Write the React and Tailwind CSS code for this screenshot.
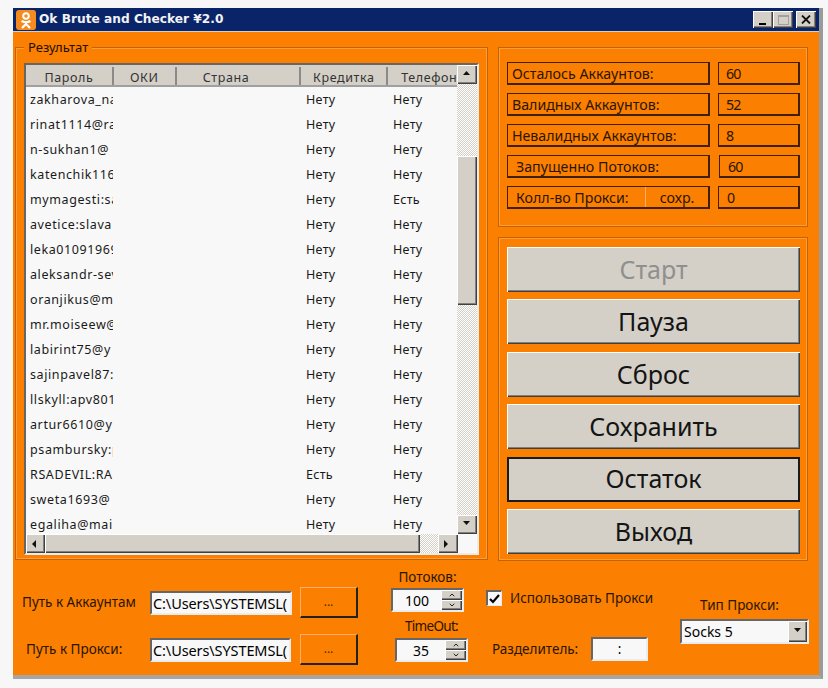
import React from "react";
import { ChevronUp, ChevronDown } from "lucide-react";

const FONT = "font-['Noto_Sans','DejaVu_Sans',sans-serif]";
const RAISED = "bg-[#d4d0c8] shadow-[inset_1px_1px_0_#ffffff,inset_-1px_-1px_0_#404040,inset_-2px_-2px_0_#808080]";
const SUNKEN = "bg-[#f8f8f8] border-t-2 border-l-2 border-t-[#666666] border-l-[#666666] border-r-2 border-b-2 border-r-[#ececec] border-b-[#ececec]";
const GROOVE = "shadow-[inset_0_0_0_1px_#c46400,inset_0_0_0_2px_#ff9c3a]";
const HATCH = "bg-[repeating-conic-gradient(#d4d0c8_0_25%,#ffffff_0_50%)] bg-[length:2px_2px]";

const rows = [
  ["zakharova_na", "Нету", "Нету"],
  ["rinat1114@ra", "Нету", "Нету"],
  ["n-sukhan1@", "Нету", "Нету"],
  ["katenchik116", "Нету", "Нету"],
  ["mymagesti:sa", "Нету", "Есть"],
  ["avetice:slava1", "Нету", "Нету"],
  ["leka01091969", "Нету", "Нету"],
  ["aleksandr-sev", "Нету", "Нету"],
  ["oranjikus@m", "Нету", "Нету"],
  ["mr.moiseew@", "Нету", "Нету"],
  ["labirint75@y", "Нету", "Нету"],
  ["sajinpavel87:", "Нету", "Нету"],
  ["llskyll:apv801", "Нету", "Нету"],
  ["artur6610@y", "Нету", "Нету"],
  ["psambursky:p", "Нету", "Нету"],
  ["RSADEVIL:RA", "Есть", "Нету"],
  ["sweta1693@", "Нету", "Нету"],
  ["egaliha@mai", "Нету", "Нету"],
];

const stats = [
  { label: "Осталось Аккаунтов:", value: "60", labelPad: "pl-[4px]", valueClass: "ml-[8px] w-[82px] pl-[7px]" },
  { label: "Валидных Аккаунтов:", value: "52", labelPad: "pl-[4px]", valueClass: "ml-[8px] w-[82px] pl-[7px]" },
  { label: "Невалидных Аккаунтов:", value: "8", labelPad: "pl-[4px]", valueClass: "ml-[8px] w-[82px] pl-[7px]" },
  { label: "Запущенно Потоков:", value: "60", labelPad: "pl-[8px]", valueClass: "ml-[9px] w-[81px] pl-[8px]" },
];

const buttons = ["Старт", "Пауза", "Сброс", "Сохранить", "Остаток", "Выход"];

const Arrow = ({ dir }) => {
  const points = { up: "0,4 7,4 3.5,0", down: "0,0 7,0 3.5,4", left: "4,0 4,8 0,4", right: "0,0 0,8 4,4" };
  return (
    <svg width="8" height="8" viewBox="0 0 8 8" className="block">
      <polygon points={points[dir]} fill="#111111" />
    </svg>
  );
};

const ScrollBtn = ({ dir, className = "" }) => (
  <div className={`${RAISED} flex items-center justify-center shrink-0 ${className}`}>
    <Arrow dir={dir} />
  </div>
);

const Spinner = ({ value, className }) => (
  <div className={`${SUNKEN} flex h-[24px] ${className}`}>
    <div className="flex-1 text-center text-[14px] leading-[21px] text-black">{value}</div>
    <div className="w-[21px] flex flex-col">
      <div className={`${RAISED} flex-1 flex items-center justify-center`}><ChevronUp size={8} strokeWidth={3} color="#222222" /></div>
      <div className={`${RAISED} flex-1 flex items-center justify-center`}><ChevronDown size={8} strokeWidth={3} color="#222222" /></div>
    </div>
  </div>
);

const OrangeBtn = () => (
  <div className="ml-[8px] w-[58px] h-[31px] flex items-center justify-center text-[12px] text-[#4a3000] bg-[#fb7f00] border-t border-l border-t-[#ffb066] border-l-[#ffb066] border-r-2 border-b-2 border-r-[#222222] border-b-[#222222]">
    ...
  </div>
);

const PathField = ({ value, width }) => (
  <div className={`${SUNKEN} ${width} h-[24px] overflow-hidden whitespace-nowrap pl-[1px] text-[14.5px] leading-[20px] text-black tracking-[-0.1px]`}>
    {value}
  </div>
);

const App = () => {
  return (
    <div className={`w-[828px] h-[688px] bg-[#f7f7f7] pt-[8px] pl-[13px] ${FONT}`}>
      <div className="w-[810px] h-[671px] flex flex-col border-r-4 border-b-4 border-r-[#9a9a9a] border-b-[#a6a6a6]">
        {/* title bar */}
        <div className="h-[23px] shrink-0 bg-[#0a246a] flex items-center">
          <svg width="20" height="20" viewBox="0 0 20 20" className="ml-[3px]">
            <rect width="20" height="20" rx="3" fill="#f58a1f" />
            <circle cx="10" cy="6" r="2.8" fill="none" stroke="#ffffff" strokeWidth="2" />
            <path d="M5.5 11 Q10 13.5 14.5 11 M10 12.5 L10 14 M6 18 L10 14 L14 18" fill="none" stroke="#ffffff" strokeWidth="2.2" />
          </svg>
          <span className="ml-[3px] text-[12.2px] font-bold text-[#f2f2f2] font-['DejaVu_Sans',sans-serif]">Ok Brute and Checker ¥2.0</span>
          <div className="ml-auto mr-[3px] flex">
            <div className={`${RAISED} w-[20px] h-[17px] flex items-end justify-center pb-[3px]`}>
              <div className="w-[7px] h-[2px] bg-black ml-[-2px]" />
            </div>
            <div className={`${RAISED} w-[20px] h-[17px] flex items-center justify-center`}>
              <div className="w-[11px] h-[10px] border border-[#a0a0a0] border-t-2" />
            </div>
            <div className={`${RAISED} w-[20px] h-[17px] ml-[3px] flex items-center justify-center`}>
              <svg width="10" height="9" viewBox="0 0 10 9">
                <path d="M1 0.5 L9 8.5 M9 0.5 L1 8.5" stroke="#111111" strokeWidth="1.8" />
              </svg>
            </div>
          </div>
        </div>
        <div className="h-px shrink-0 bg-[#d4d0c8]" />

        {/* body */}
        <div className="flex-1 min-h-0 bg-[#fb7f00] flex flex-col pt-[15px]">
          <div className="flex h-[513px] shrink-0">
            {/* results */}
            <div className={`relative ml-[2px] w-[473px] ${GROOVE} pt-[16px] pl-[9px]`}>
              <div className="absolute left-[9px] top-[-8px] px-[4px] bg-[#fb7f00] text-[13px] leading-[16px] text-[#201000]">Результат</div>
              <div className="w-[455px] h-[492px] flex flex-col border-2 border-t-[#666666] border-l-[#666666] border-r-[#ececec] border-b-[#ececec] bg-[#f8f8f8] text-[12.5px] text-[#1a1a1a]">
                <div className="flex-1 min-h-0 flex">
                  <div className="w-[432px] min-w-0 flex flex-col overflow-hidden">
                    <div className="h-[22px] shrink-0 flex bg-[#d4d0c8] border-t-2 border-t-[#d4d0c8] border-b-2 border-b-[#a0a0a0] leading-[21px] text-[#333333] tracking-[0.6px]">
                      <div className="w-[88px] text-center border-r-2 border-r-[#8a8a8a]">Пароль</div>
                      <div className="w-[63px] text-center border-r-2 border-r-[#8a8a8a]">ОКИ</div>
                      <div className="w-[125px] pr-[24px] text-center border-r-2 border-r-[#8a8a8a]">Страна</div>
                      <div className="w-[87px] text-center border-r-2 border-r-[#8a8a8a]">Кредитка</div>
                      <div className="w-[69px] pl-[13px] overflow-hidden whitespace-nowrap">Телефон</div>
                    </div>
                    {rows.map((row, i) => (
                      <div key={i} className="h-[25px] shrink-0 flex items-center leading-[25px]">
                        <div className="w-[87px] pl-[4px] overflow-hidden whitespace-nowrap tracking-[0.6px]">{row[0]}</div>
                        <div className="w-[193px]" />
                        <div className="w-[87px] tracking-[0.3px]">{row[1]}</div>
                        <div className="tracking-[0.3px]">{row[2]}</div>
                      </div>
                    ))}
                  </div>
                  <div className={`w-[20px] flex flex-col ${HATCH}`}>
                    <ScrollBtn dir="up" className="h-[19px]" />
                    <div className="h-[72px]" />
                    <div className={`${RAISED} h-[149px]`} />
                    <div className="flex-1" />
                    <ScrollBtn dir="down" className="h-[19px]" />
                  </div>
                </div>
                <div className="h-[19px] shrink-0 flex">
                  <ScrollBtn dir="left" className="w-[19px]" />
                  <div className={`${RAISED} w-[375px]`} />
                  <div className={`w-[18px] ${HATCH}`} />
                  <ScrollBtn dir="right" className="w-[20px]" />
                </div>
              </div>
            </div>

            {/* right column */}
            <div className="ml-[10px] w-[310px] flex flex-col">
              <div className={`h-[180px] shrink-0 ${GROOVE} pt-[15px] pl-[9px] flex flex-col gap-[8px] text-[14.2px] text-[#2a1500]`}>
                {stats.map((s) => (
                  <div key={s.label} className="flex h-[23px] leading-[22px]">
                    <div className={`w-[203px] border border-[#402000] border-r-2 border-b-2 ${s.labelPad}`}>{s.label}</div>
                    <div className={`border border-[#402000] border-r-2 border-b-2 tracking-[-0.8px] ${s.valueClass}`}>{s.value}</div>
                  </div>
                ))}
                <div className="flex h-[23px] leading-[22px]">
                  <div className="w-[203px] flex border border-[#402000] border-r-2 border-b-2">
                    <div className="w-[138px] pl-[8px] border-r border-r-[#ffb066] whitespace-nowrap">Колл-во Прокси:</div>
                    <div className="flex-1 text-center">сохр.</div>
                  </div>
                  <div className="ml-[8px] w-[82px] pl-[8px] border border-[#402000] border-r-2 border-b-2">0</div>
                </div>
              </div>
              <div className={`mt-[10px] h-[324px] shrink-0 ${GROOVE} pt-[10px] pl-[9px] flex flex-col gap-[7.4px]`}>
                {buttons.map((b, i) => (
                  <div
                    key={b}
                    className={`w-[293px] h-[45px] shrink-0 flex items-center justify-center text-[25px] ${RAISED} ${i === 0 ? "text-[#8f8f8f]" : "text-[#141414]"} ${i === 4 ? "outline-2 -outline-offset-2 outline-[#1a1a1a]" : ""}`}
                  >
                    {b}
                  </div>
                ))}
              </div>
            </div>
          </div>

          {/* bottom controls */}
          <div className="flex-1 min-h-0 flex text-[13.5px] text-[#2a1500]">
            <div className="w-[373px] shrink-0 pt-[27px] flex flex-col gap-[16px]">
              <div className="flex items-center">
                <div className="w-[137px] pl-[9px] whitespace-nowrap">Путь к Аккаунтам</div>
                <PathField value="C:\Users\SYSTEMSL(" width="w-[142px]" />
                <OrangeBtn />
              </div>
              <div className="flex items-center">
                <div className="w-[137px] pl-[13px] whitespace-nowrap">Путь к Прокси:</div>
                <PathField value="C:\Users\SYSTEMSL(" width="w-[141px]" />
                <div className="ml-[1px]"><OrangeBtn /></div>
              </div>
            </div>

            <div className="w-[100px] shrink-0 pt-[8px] pl-[5px]">
              <div className="w-[73px] text-center leading-[18px] mb-[2px]">Потоков:</div>
              <Spinner value="100" className="w-[73px]" />
              <div className="w-[73px] ml-[4px] text-center leading-[18px] mt-[5px] mb-[3px] tracking-[-0.7px]">TimeOut:</div>
              <Spinner value="35" className="w-[73px] ml-[4px]" />
            </div>

            <div className="w-[194px] shrink-0 pt-[28px]">
              <div className="flex items-center">
                <div className="w-[16px] h-[16px] bg-[#f8f8f8] border-t-2 border-l-2 border-t-[#666666] border-l-[#666666] border-r border-b border-r-[#ececec] border-b-[#ececec] flex items-center justify-center">
                  <svg width="11" height="10" viewBox="0 0 11 10">
                    <path d="M1 5 L4 8 L10 1" fill="none" stroke="#000000" strokeWidth="2.2" />
                  </svg>
                </div>
                <span className="ml-[8px] whitespace-nowrap">Использовать Прокси</span>
              </div>
              <div className="flex items-center mt-[29px]">
                <span className="ml-[6px] w-[99px] whitespace-nowrap">Разделитель:</span>
                <div className={`${SUNKEN} w-[57px] h-[24px] text-center leading-[20px] text-black`}>:</div>
              </div>
            </div>

            <div className="w-[129px] shrink-0 pt-[36px]">
              <div className="pr-[10px] text-center leading-[18px] mb-[5px]">Тип Прокси:</div>
              <div className={`${SUNKEN} h-[25px] flex items-center`}>
                <span className="flex-1 pl-[2px] text-black text-[14px]">Socks 5</span>
                <ScrollBtn dir="down" className="w-[19px] h-[21px]" />
              </div>
            </div>
          </div>
        </div>
      </div>
    </div>
  );
};

export default App;
